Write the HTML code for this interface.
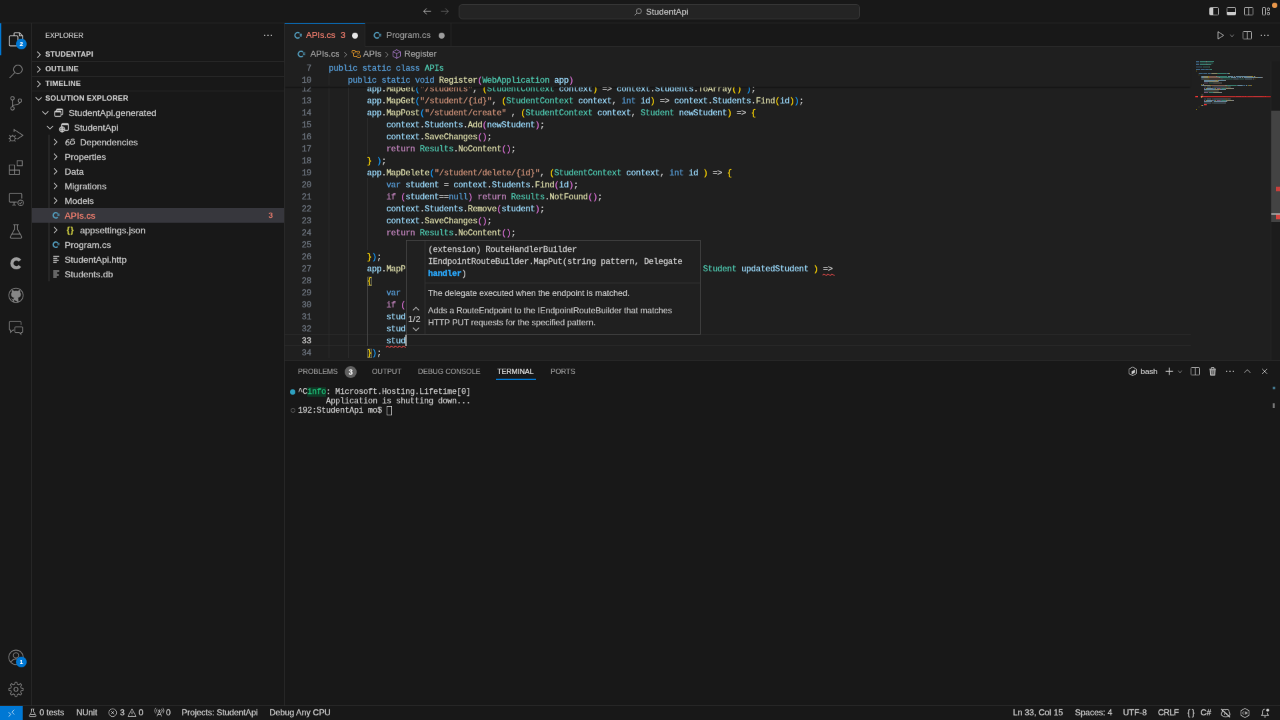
<!DOCTYPE html>
<html>
<head>
<meta charset="utf-8">
<title>APIs.cs — StudentApi</title>
<style>
html,body{margin:0;padding:0;width:1280px;height:720px;overflow:hidden;background:#181818;}
*{box-sizing:border-box;}
#app{will-change:transform;position:absolute;left:0;top:0;width:1920px;height:1080px;transform:scale(0.6666667);transform-origin:0 0;
  font-family:"Liberation Sans",sans-serif;font-size:13px;color:#cccccc;background:#181818;overflow:hidden;-webkit-text-stroke:0.180px;}
.abs{position:absolute;}
svg{display:block;overflow:visible;}
.ic{position:absolute;fill:none;stroke:currentColor;stroke-width:1;}

/* ---------- title bar ---------- */
#titlebar{left:0;top:0;width:1920px;height:35px;background:#181818;border-bottom:1px solid #2b2b2b;}
#cmdcenter{left:688px;top:6px;width:602px;height:23px;background:#242424;border:1px solid #3a3a3a;border-radius:6px;}
#cmdcenter span{position:absolute;left:280px;top:3px;font-size:13px;color:#cccccc;}

/* ---------- activity bar ---------- */
#activity{left:0;top:35px;width:48px;height:1023px;background:#181818;border-right:1px solid #2b2b2b;}
#activity .act{position:absolute;left:0;width:48px;height:48px;color:#868686;}
#activity .act.on{color:#d7d7d7;}
#activity .act.on:before{content:"";position:absolute;left:0;top:0;width:2px;height:48px;background:#0078d4;}
.badge{position:absolute;width:16px;height:16px;border-radius:8px;background:#0078d4;color:#fff;font-size:9px;font-weight:bold;text-align:center;line-height:16px;}

/* ---------- sidebar ---------- */
#sidebar{left:48px;top:35px;width:379px;height:1023px;background:#181818;border-right:1px solid #2b2b2b;}
#sidebar .title{left:20px;top:0;height:35px;line-height:37px;font-size:10.5px;color:#cccccc;}
.sec{position:absolute;left:0;width:378px;height:22px;border-top:1px solid #2b2b2b;font-size:11px;font-weight:bold;color:#cccccc;line-height:20px;letter-spacing:0.25px;}
.sec.first{border-top-color:transparent;}
.sec span{position:absolute;left:20px;}
.row{-webkit-text-stroke:0.280px;position:absolute;left:0;width:378px;height:22px;line-height:23.500px;font-size:13.6px;color:#cccccc;white-space:nowrap;}
.row span{position:absolute;top:0;}
.row.sel{background:#37373d;}
.err{color:#f88070;}

/* ---------- editor ---------- */
#editor{left:427px;top:35px;width:1493px;height:505px;background:#1f1f1f;}
#tabs{left:0;top:0;width:1493px;height:35px;background:#181818;border-bottom:1px solid #2b2b2b;}
.tab{position:absolute;top:0;height:35px;border-right:1px solid #2b2b2b;font-size:13px;line-height:35px;}
.tab.on{background:#1f1f1f;border-top:1px solid #0078d4;height:36px;line-height:33px;}
.tab span{position:absolute;top:0;}
#crumbs{left:0;top:35px;width:1493px;height:22px;line-height:22px;font-size:13px;color:#a9a9a9;background:#1f1f1f;}
#crumbs span{position:absolute;top:0;}

.code{font-family:"Liberation Mono",monospace;font-size:12.600px;letter-spacing:-0.360px;line-height:18px;white-space:pre;color:#cccccc;-webkit-text-stroke:0.300px;}
.ln{position:absolute;margin-top:2px;left:0;width:40px;text-align:right;color:#6e7681;}
.ln.cur{color:#cccccc;}
.cl{position:absolute;margin-top:2px;left:66px;}
.k{color:#569cd6}.c{color:#c586c0}.t{color:#4ec9b0}.v{color:#9cdcfe}.f{color:#dcdcaa}.s{color:#ce9178}
.b1{color:#ffd700}.b2{color:#da70d6}.b3{color:#179fff}
.sq{position:relative;}
.sq svg{position:absolute;left:0;bottom:-4px;}

/* ---------- panel ---------- */
#panel{left:427px;top:540px;width:1493px;height:518px;background:#181818;border-top:1px solid #2b2b2b;}
.ptab{position:absolute;top:0;height:35px;line-height:33px;font-size:10.75px;color:#9d9d9d;}
.ptab.on{color:#e7e7e7;}
.term{-webkit-text-stroke:0.250px;font-family:"Liberation Mono",monospace;font-size:12px;white-space:pre;color:#cccccc;position:absolute;}

/* ---------- status bar ---------- */
#status{left:0;top:1058px;width:1920px;height:22px;background:#181818;border-top:1px solid #2b2b2b;font-size:12.6px;line-height:21px;color:#cccccc;}
#status span{position:absolute;top:0;white-space:nowrap;-webkit-text-stroke:0.300px;}
#remote{left:0;top:0;width:34px;height:22px;background:#0078d4;}
#minimap i{position:absolute;height:1.400px;display:block;}
.guide{position:absolute;width:1px;background:#2e2e2e;}
.bm{outline:1px solid #6b6b55;outline-offset:-1px;background:rgba(120,120,90,0.12);}
.row .ic{stroke-width:1.300;}
</style>
</head>
<body>
<div id="app">

<!-- TITLEBAR -->
<div id="titlebar" class="abs">
  <svg class="ic" style="left:632.5px;top:9.0px;color:#cccccc" width="16" height="16" viewBox="0 0 16 16" stroke-width="1.1"><path d="M13.500 8h-11M7 3.500L2.500 8 7 12.500"/></svg><svg class="ic" style="left:659.0px;top:9.0px;color:#6c6c6c" width="16" height="16" viewBox="0 0 16 16" stroke-width="1.1"><path d="M2.500 8h11M9 3.500L13.500 8 9 12.500"/></svg>
  <div id="cmdcenter" class="abs"><svg class="ic" style="left:261.0px;top:4.0px;color:#cccccc" width="14" height="14" viewBox="0 0 16 16" stroke-width="1.1"><circle cx="9.500" cy="6.500" r="4.300"/><path d="M6.500 9.500L2 14"/></svg><span>StudentApi</span></div>
  <svg class="ic" style="left:1813.0px;top:9.0px;color:#cccccc" width="16" height="16" viewBox="0 0 16 16" stroke-width="1.1"><rect x="1.500" y="2.500" width="13" height="11" rx="1"/><path d="M2 3h4.500v10H2z" fill="currentColor" stroke="none"/><path d="M6.500 2.500v11"/></svg><svg class="ic" style="left:1839.0px;top:9.0px;color:#cccccc" width="16" height="16" viewBox="0 0 16 16" stroke-width="1.1"><rect x="1.500" y="2.500" width="13" height="11" rx="1"/><path d="M2 9h12v4H2z" fill="currentColor" stroke="none"/></svg><svg class="ic" style="left:1865.0px;top:9.0px;color:#cccccc" width="16" height="16" viewBox="0 0 16 16" stroke-width="1.1"><rect x="1.500" y="2.500" width="13" height="11" rx="1"/><path d="M8 2.500v11"/></svg><svg class="ic" style="left:1891.0px;top:9.0px;color:#cccccc" width="16" height="16" viewBox="0 0 16 16" stroke-width="1.1"><rect x="2.500" y="2.500" width="5" height="11" rx="1"/><rect x="10" y="3" width="3.500" height="3.500" rx="1"/><rect x="10" y="9.500" width="3.500" height="3.500" rx="1"/></svg>
  <div class="abs" style="left:1908px;top:4px;width:8px;height:8px;border-radius:4px;background:#e8964a;"></div>
</div>

<!-- ACTIVITY -->
<div id="activity" class="abs">
<div class="act on" style="top:0px"><svg class="ic" style="left:10px;top:10px" width="28" height="28" viewBox="0 0 24 24" stroke-width="1.700"><path d="M9.5 7.5v-3a1 1 0 0 1 1-1h6l4 4v9a1 1 0 0 1-1 1h-5"/><path d="M16.5 3.5v4h4"/><rect x="3.5" y="7.5" width="11" height="13" rx="1.2"/></svg><div class="badge" style="left:24px;top:23px;">2</div></div>
<div class="act" style="top:48px"><svg class="ic" style="left:10px;top:10px" width="28" height="28" viewBox="0 0 24 24" stroke-width="1.700"><circle cx="14.5" cy="9.5" r="5.6"/><path d="M10.5 13.6L3.8 20.5"/></svg></div>
<div class="act" style="top:96px"><svg class="ic" style="left:10px;top:10px" width="28" height="28" viewBox="0 0 24 24" stroke-width="1.700"><circle cx="7.5" cy="5.5" r="2.2"/><circle cx="7.5" cy="18.5" r="2.2"/><circle cx="17" cy="8.5" r="2.2"/><path d="M7.5 7.7v8.6"/><path d="M17 10.7c0 4.3-9.5 1.8-9.5 5.6"/></svg></div>
<div class="act" style="top:144px"><svg class="ic" style="left:10px;top:10px" width="28" height="28" viewBox="0 0 24 24" stroke-width="1.700"><path d="M9.5 7.5V4.5L21 12l-7.5 5"/><circle cx="7.5" cy="16" r="3.2"/><path d="M7.5 12.8v-1.5M4.3 16H2.5M12.5 16h-1.8M5 13.5L3.5 12M10 13.5l1.5-1.5M5 18.6l-1.5 1.4M10 18.6l1.5 1.4"/></svg></div>
<div class="act" style="top:192px"><svg class="ic" style="left:10px;top:10px" width="28" height="28" viewBox="0 0 24 24" stroke-width="1.700"><path d="M3.5 9h6.5v6.5h6.5V21H3.5z"/><path d="M3.5 15.5H10V21"/><rect x="13.5" y="3.5" width="6.5" height="6.5"/></svg></div>
<div class="act" style="top:240px"><svg class="ic" style="left:10px;top:10px" width="28" height="28" viewBox="0 0 24 24" stroke-width="1.700"><path d="M13 15.5H4.5a1 1 0 0 1-1-1V5.500a1 1 0 0 1 1-1h14a1 1 0 0 1 1 1V11"/><path d="M7 19.500h5M9.5 15.500v4"/><circle cx="18" cy="16.500" r="3.6"/><path d="M16.300 16.600l1.200 1.200 2.200-2.500"/></svg></div>
<div class="act" style="top:288px"><svg class="ic" style="left:10px;top:10px" width="28" height="28" viewBox="0 0 24 24" stroke-width="1.700"><path d="M8.500 3.500h7"/><path d="M10 3.500v6L4.700 19a1.200 1.200 0 0 0 1 1.800h12.600a1.200 1.200 0 0 0 1-1.800L14 9.500v-6"/><path d="M6.800 15.500h10.400"/></svg></div>
<div class="act" style="top:336px"><svg class="ic" style="left:10px;top:10px" width="28" height="28" viewBox="0 0 24 24" stroke-width="1.700"><path d="M17 8.600A5.700 5.700 0 1 0 17 15.400" stroke-width="4.200" stroke="#9e9e9e"/></svg></div>
<div class="act" style="top:384px"><svg class="ic" style="left:10px;top:10px" width="28" height="28" viewBox="0 0 24 24" stroke-width="1.700"><circle cx="12" cy="12" r="9.200"/><path d="M9.300 20.500v-3.200c-2.500.6-3.300-1.300-3.800-1.800M9.300 17.300c-.2-1 .2-1.800.7-2.300-2.200-.3-4-1.200-4-4.300 0-1 .4-2 1-2.700-.2-.6-.3-1.500.1-2.500 1 0 2 .6 2.600 1.100 1.500-.4 3.100-.4 4.600 0 .6-.5 1.600-1.100 2.600-1.100.4 1 .3 1.900.1 2.500.6.700 1 1.700 1 2.700 0 3.100-1.800 4-4 4.300.5.500.9 1.300.7 2.300v3.200z" fill="currentColor" stroke-width="0.600"/></svg></div>
<div class="act" style="top:432px"><svg class="ic" style="left:10px;top:10px" width="28" height="28" viewBox="0 0 24 24" stroke-width="1.700"><path d="M9.500 15.500H8l-3 3v-3H4.500a1 1 0 0 1-1-1v-9a1 1 0 0 1 1-1h13a1 1 0 0 1 1 1V9"/><path d="M11.500 11.500h8a1 1 0 0 1 1 1v5a1 1 0 0 1-1 1H18.500v2.500L16 18.500h-4.500a1 1 0 0 1-1-1v-5a1 1 0 0 1 1-1z"/></svg></div>
<div class="act" style="top:927px"><svg class="ic" style="left:10px;top:10px" width="28" height="28" viewBox="0 0 24 24" stroke-width="1.700"><circle cx="12" cy="12" r="9.300"/><circle cx="12" cy="9.500" r="3.400"/><path d="M5.500 18.500c1.200-3 3.500-4.200 6.500-4.200s5.300 1.200 6.500 4.200"/></svg><div class="badge" style="left:24px;top:23px;">1</div></div>
<div class="act" style="top:975px"><svg class="ic" style="left:10px;top:10px" width="28" height="28" viewBox="0 0 24 24" stroke-width="1.700"><path d="M10.79 2.78 L13.21 2.78 L13.75 5.43 L15.41 6.12 L17.67 4.63 L19.37 6.33 L17.88 8.59 L18.57 10.25 L21.22 10.79 L21.22 13.21 L18.57 13.75 L17.88 15.41 L19.37 17.67 L17.67 19.37 L15.41 17.88 L13.75 18.57 L13.21 21.22 L10.79 21.22 L10.25 18.57 L8.59 17.88 L6.33 19.37 L4.63 17.67 L6.12 15.41 L5.43 13.75 L2.78 13.21 L2.78 10.79 L5.43 10.25 L6.12 8.59 L4.63 6.33 L6.33 4.63 L8.59 6.12 L10.25 5.43Z" stroke-linejoin="round"/><circle cx="12" cy="12" r="2.600"/></svg></div>
</div>

<!-- SIDEBAR -->
<div id="sidebar" class="abs">
  <div class="title abs">EXPLORER</div>
  <svg class="abs" style="left:346px;top:10px" width="16" height="16" viewBox="0 0 16 16"><circle cx="3" cy="8" r="1.1" fill="#ccc"/><circle cx="8" cy="8" r="1.1" fill="#ccc"/><circle cx="13" cy="8" r="1.1" fill="#ccc"/></svg>
<div class="sec first" style="top:35px"><svg class="ic" style="left:2px;top:3px" width="16" height="16" viewBox="0 0 16 16"><path d="M6 3.5l4.5 4.5L6 12.5" stroke-width="1.1"/></svg><span>STUDENTAPI</span></div>
<div class="sec" style="top:57px"><svg class="ic" style="left:2px;top:3px" width="16" height="16" viewBox="0 0 16 16"><path d="M6 3.5l4.5 4.5L6 12.5" stroke-width="1.1"/></svg><span>OUTLINE</span></div>
<div class="sec" style="top:79px"><svg class="ic" style="left:2px;top:3px" width="16" height="16" viewBox="0 0 16 16"><path d="M6 3.5l4.5 4.5L6 12.5" stroke-width="1.1"/></svg><span>TIMELINE</span></div>
<div class="sec" style="top:101px"><svg class="ic" style="left:2px;top:3px" width="16" height="16" viewBox="0 0 16 16"><path d="M3.5 6l4.5 4.5L12.5 6" stroke-width="1.1"/></svg><span>SOLUTION EXPLORER</span></div>

  <div class="abs" style="left:25px;top:167px;width:1px;height:220px;background:#4c4c4c;"></div>
<div class="row" style="top:123px"><svg class="ic" style="left:12px;top:3px" width="16" height="16" viewBox="0 0 16 16"><path d="M3.5 6l4.5 4.5L12.5 6" stroke-width="1.1"/></svg><svg class="ic" style="left:32px;top:3px" width="16" height="16" viewBox="0 0 16 16"><rect x="2" y="5.500" width="9.500" height="8" rx="1.600"/><path d="M2.500 6.600h8.500" stroke-width="1.800"/><path d="M4.800 5v-1a1.600 1.600 0 0 1 1.600-1.600h6a1.600 1.600 0 0 1 1.600 1.600v5.500a1.600 1.600 0 0 1-1.600 1.600h-.8"/><path d="M5.500 3.300h8" stroke-width="1.600"/></svg><span style="left:55px">StudentApi.generated</span></div>
<div class="row" style="top:145px"><svg class="ic" style="left:19px;top:3px" width="16" height="16" viewBox="0 0 16 16"><path d="M3.5 6l4.5 4.5L12.5 6" stroke-width="1.1"/></svg><svg class="ic" style="left:40px;top:3px" width="16" height="16" viewBox="0 0 16 16"><rect x="4.500" y="2.500" width="10" height="10" rx="1.600"/><path d="M5 3.800h9" stroke-width="2"/><circle cx="5.200" cy="11" r="3.900" fill="#181818"/><path d="M1.300 11h7.800M5.200 7.100v7.800"/><ellipse cx="5.200" cy="11" rx="1.700" ry="3.900"/></svg><span style="left:63px">StudentApi</span></div>
<div class="row" style="top:167px"><svg class="ic" style="left:27px;top:3px" width="16" height="16" viewBox="0 0 16 16"><path d="M6 3.5l4.5 4.5L6 12.5" stroke-width="1.1"/></svg><svg class="ic" style="left:49px;top:3px" width="16" height="16" viewBox="0 0 16 16"><circle cx="4.300" cy="10.200" r="2.500"/><rect x="8.600" y="6.300" width="6" height="4.800" rx="1.300" transform="rotate(-8 11.600 8.700)"/><path d="M1.900 9.500c-.3-3.500 2-5.500 5.200-4.800M9.300 5c1.400-1.500 3.800-1.700 5.400-.4"/></svg><span style="left:72px">Dependencies</span></div>
<div class="row" style="top:189px"><svg class="ic" style="left:27px;top:3px" width="16" height="16" viewBox="0 0 16 16"><path d="M6 3.5l4.5 4.5L6 12.5" stroke-width="1.1"/></svg><span style="left:49px">Properties</span></div>
<div class="row" style="top:211px"><svg class="ic" style="left:27px;top:3px" width="16" height="16" viewBox="0 0 16 16"><path d="M6 3.5l4.5 4.5L6 12.5" stroke-width="1.1"/></svg><span style="left:49px">Data</span></div>
<div class="row" style="top:233px"><svg class="ic" style="left:27px;top:3px" width="16" height="16" viewBox="0 0 16 16"><path d="M6 3.5l4.5 4.5L6 12.5" stroke-width="1.1"/></svg><span style="left:49px">Migrations</span></div>
<div class="row" style="top:255px"><svg class="ic" style="left:27px;top:3px" width="16" height="16" viewBox="0 0 16 16"><path d="M6 3.5l4.5 4.5L6 12.5" stroke-width="1.1"/></svg><span style="left:49px">Models</span></div>
<div class="row sel" style="top:277px"><svg class="abs" style="left:28px;top:3px" width="16" height="16" viewBox="0 0 16 16"><path d="M10.6 5.2A4 4 0 1 0 10.6 10.8" fill="none" stroke="#519aba" stroke-width="2.2"/><path d="M10.2 6.2h3.2M10.2 8.2h3.2M11 5.2v4M12.6 5.2v4" stroke="#519aba" stroke-width="0.8" fill="none"/></svg><span class="err" style="left:49px">APIs.cs</span><span class="err" style="left:355px;font-size:11px;">3</span></div>
<div class="row" style="top:299px"><svg class="ic" style="left:27px;top:3px" width="16" height="16" viewBox="0 0 16 16"><path d="M6 3.5l4.5 4.5L6 12.5" stroke-width="1.1"/></svg><span style="left:52px;color:#cbcb41;font-size:12px;font-weight:bold;letter-spacing:1px;">{}</span><span style="left:72px">appsettings.json</span></div>
<div class="row" style="top:321px"><svg class="abs" style="left:28px;top:3px" width="16" height="16" viewBox="0 0 16 16"><path d="M10.6 5.2A4 4 0 1 0 10.6 10.8" fill="none" stroke="#519aba" stroke-width="2.2"/><path d="M10.2 6.2h3.2M10.2 8.2h3.2M11 5.2v4M12.6 5.2v4" stroke="#519aba" stroke-width="0.8" fill="none"/></svg><span style="left:49px">Program.cs</span></div>
<div class="row" style="top:343px"><svg class="abs" style="left:29px;top:3px" width="16" height="16" viewBox="0 0 16 16"><path d="M3 3.5h9M3 6.5h6M3 9.5h8M3 12.5h5" stroke="#c5c5c5" stroke-width="1.7" fill="none"/></svg><span style="left:49px">StudentApi.http</span></div>
<div class="row" style="top:365px"><svg class="abs" style="left:29px;top:3px" width="16" height="16" viewBox="0 0 16 16"><path d="M3 3.5h9M3 6.5h6M3 9.5h8M3 12.5h5" stroke="#c5c5c5" stroke-width="1.7" fill="none"/></svg><span style="left:49px">Students.db</span></div>
</div>

<!-- EDITOR -->
<div id="editor" class="abs">
  <div id="tabs" class="abs">
    <div class="tab on" style="left:0;width:121px;">
      <svg class="ic" style="left:11.6px;top:9.0px;color:#cccccc" width="16" height="16" viewBox="0 0 16 16" stroke-width="1.1"><path d="M10.300 5A4.100 4.100 0 1 0 10.300 11" stroke="#519aba" stroke-width="2.100"/><path d="M10.500 6.500h3.500M10.500 8.800h3.500M11.400 5.300v4.700M13.100 5.300v4.700" stroke="#519aba" stroke-width=".8"/></svg><span class="err" style="left:32px;">APIs.cs</span><span class="err" style="left:84px;">3</span>
      <div class="abs" style="left:100.500px;top:12.500px;width:9px;height:9px;border-radius:5px;background:#e6e6e6;"></div>
    </div>
    <div class="tab" style="left:121px;width:129px;color:#9d9d9d;">
      <svg class="ic" style="left:10.1px;top:10.0px;color:#cccccc" width="16" height="16" viewBox="0 0 16 16" stroke-width="1.1"><path d="M10.300 5A4.100 4.100 0 1 0 10.300 11" stroke="#519aba" stroke-width="2.100"/><path d="M10.500 6.500h3.500M10.500 8.800h3.500M11.400 5.300v4.700M13.100 5.300v4.700" stroke="#519aba" stroke-width=".8"/></svg><span style="left:31.500px;">Program.cs</span>
      <div class="abs" style="left:109.500px;top:13.500px;width:9px;height:9px;border-radius:5px;background:#9d9d9d;"></div>
    </div>
    <svg class="ic" style="left:1396.0px;top:10.0px;color:#cccccc" width="16" height="16" viewBox="0 0 16 16" stroke-width="1.1"><path d="M4 2.500v11l8.500-5.500z" stroke-linejoin="round"/></svg><svg class="ic" style="left:1415.0px;top:12.0px;color:#cccccc" width="12" height="12" viewBox="0 0 16 16" stroke-width="1.1"><path d="M4 6.500l4 4 4-4"/></svg><svg class="ic" style="left:1436.0px;top:10.0px;color:#cccccc" width="16" height="16" viewBox="0 0 16 16" stroke-width="1.1"><rect x="1.500" y="2.500" width="13" height="11" rx="1"/><path d="M8 2.500v11"/></svg><svg class="ic" style="left:1462.0px;top:10.0px;color:#cccccc" width="16" height="16" viewBox="0 0 16 16" stroke-width="1.1"><circle cx="3" cy="8" r="1" fill="currentColor" stroke="none"/><circle cx="8" cy="8" r="1" fill="currentColor" stroke="none"/><circle cx="13" cy="8" r="1" fill="currentColor" stroke="none"/></svg>
  </div>
  <div id="crumbs" class="abs">
    <svg class="ic" style="left:16.8px;top:3.0px;color:#cccccc" width="16" height="16" viewBox="0 0 16 16" stroke-width="1.1"><path d="M10.300 5A4.100 4.100 0 1 0 10.300 11" stroke="#519aba" stroke-width="2.100"/><path d="M10.500 6.500h3.500M10.500 8.800h3.500M11.400 5.300v4.700M13.100 5.300v4.700" stroke="#519aba" stroke-width=".8"/></svg><span style="left:38.400px;">APIs.cs</span><svg class="ic" style="left:84.0px;top:4.5px;color:#a9a9a9" width="14" height="14" viewBox="0 0 16 16" stroke-width="1.1"><path d="M6 3.500l4.500 4.500L6 12.500"/></svg><svg class="ic" style="left:99.0px;top:3.0px;color:#ee9d28" width="16" height="16" viewBox="0 0 16 16" stroke-width="1.2"><rect x="2" y="2.500" width="5" height="4" rx="1"/><rect x="9.500" y="9.500" width="5" height="4" rx="1"/><rect x="9.500" y="4" width="4" height="3" rx="1"/><path d="M4.500 6.500v5h5M7 4.500h2.500" /></svg><span style="left:117.800px;">APIs</span><svg class="ic" style="left:146.0px;top:4.5px;color:#a9a9a9" width="14" height="14" viewBox="0 0 16 16" stroke-width="1.1"><path d="M6 3.500l4.500 4.500L6 12.500"/></svg><svg class="ic" style="left:160.2px;top:3.0px;color:#b180d7" width="16" height="16" viewBox="0 0 16 16" stroke-width="1.2"><path d="M8 1.500l5.500 3v7L8 14.500l-5.500-3v-7z"/><path d="M2.500 4.500L8 7.500l5.500-3M8 7.500v7"/></svg><span style="left:179.500px;">Register</span>
  </div>

  <!-- code area -->
  <div id="codearea" class="abs" style="left:0;top:57px;width:1493px;height:448px;overflow:hidden;">
   <div class="abs" style="left:0;top:-57px;width:1493px;height:502px;">
    <div class="abs" style="left:0;top:466px;width:1359px;height:18px;border-top:1px solid #2a2a2a;border-bottom:1px solid #2a2a2a;"></div>
<div class="guide" style="left:66.0px;top:88px;height:414px;"></div><div class="guide" style="left:95.0px;top:88px;height:414px;"></div><div class="guide" style="left:124.0px;top:142px;height:54px;"></div><div class="guide" style="left:124.0px;top:232px;height:108px;"></div><div class="guide" style="left:124.0px;top:394px;height:90px;background:#4a4a4a;"></div>
<div class="ln code" style="top:88px">12</div><div class="cl code" style="top:88px">        <span class="v">app</span>.<span class="f">MapGet</span><span class="b3">(</span><span class="s">"/students"</span>, <span class="b1">(</span><span class="t">StudentContext</span> <span class="v">context</span><span class="b1">)</span> =&gt; <span class="v">context</span>.<span class="v">Students</span>.<span class="f">ToArray</span><span class="b1">()</span> <span class="b3">)</span>;</div>
<div class="ln code" style="top:106px">13</div><div class="cl code" style="top:106px">        <span class="v">app</span>.<span class="f">MapGet</span><span class="b3">(</span><span class="s">"/student/{id}"</span>, <span class="b1">(</span><span class="t">StudentContext</span> <span class="v">context</span>, <span class="k">int</span> <span class="v">id</span><span class="b1">)</span> =&gt; <span class="v">context</span>.<span class="v">Students</span>.<span class="f">Find</span><span class="b1">(</span><span class="v">id</span><span class="b1">)</span><span class="b3">)</span>;</div>
<div class="ln code" style="top:124px">14</div><div class="cl code" style="top:124px">        <span class="v">app</span>.<span class="f">MapPost</span><span class="b3">(</span><span class="s">"/student/create"</span> , <span class="b1">(</span><span class="t">StudentContext</span> <span class="v">context</span>, <span class="t">Student</span> <span class="v">newStudent</span><span class="b1">)</span> =&gt; <span class="b1">{</span></div>
<div class="ln code" style="top:142px">15</div><div class="cl code" style="top:142px">            <span class="v">context</span>.<span class="v">Students</span>.<span class="f">Add</span><span class="b2">(</span><span class="v">newStudent</span><span class="b2">)</span>;</div>
<div class="ln code" style="top:160px">16</div><div class="cl code" style="top:160px">            <span class="v">context</span>.<span class="f">SaveChanges</span><span class="b2">()</span>;</div>
<div class="ln code" style="top:178px">17</div><div class="cl code" style="top:178px">            <span class="c">return</span> <span class="t">Results</span>.<span class="f">NoContent</span><span class="b2">()</span>;</div>
<div class="ln code" style="top:196px">18</div><div class="cl code" style="top:196px">        <span class="b1">}</span> <span class="b3">)</span>;</div>
<div class="ln code" style="top:214px">19</div><div class="cl code" style="top:214px">        <span class="v">app</span>.<span class="f">MapDelete</span><span class="b3">(</span><span class="s">"/student/delete/{id}"</span>, <span class="b1">(</span><span class="t">StudentContext</span> <span class="v">context</span>, <span class="k">int</span> <span class="v">id</span> <span class="b1">)</span> =&gt; <span class="b1">{</span></div>
<div class="ln code" style="top:232px">20</div><div class="cl code" style="top:232px">            <span class="k">var</span> <span class="v">student</span> = <span class="v">context</span>.<span class="v">Students</span>.<span class="f">Find</span><span class="b2">(</span><span class="v">id</span><span class="b2">)</span>;</div>
<div class="ln code" style="top:250px">21</div><div class="cl code" style="top:250px">            <span class="c">if</span> <span class="b2">(</span><span class="v">student</span>==<span class="k">null</span><span class="b2">)</span> <span class="c">return</span> <span class="t">Results</span>.<span class="f">NotFound</span><span class="b2">()</span>;</div>
<div class="ln code" style="top:268px">22</div><div class="cl code" style="top:268px">            <span class="v">context</span>.<span class="v">Students</span>.<span class="f">Remove</span><span class="b2">(</span><span class="v">student</span><span class="b2">)</span>;</div>
<div class="ln code" style="top:286px">23</div><div class="cl code" style="top:286px">            <span class="v">context</span>.<span class="f">SaveChanges</span><span class="b2">()</span>;</div>
<div class="ln code" style="top:304px">24</div><div class="cl code" style="top:304px">            <span class="c">return</span> <span class="t">Results</span>.<span class="f">NoContent</span><span class="b2">()</span>;</div>
<div class="ln code" style="top:322px">25</div><div class="cl code" style="top:322px"></div>
<div class="ln code" style="top:340px">26</div><div class="cl code" style="top:340px">        <span class="b1">}</span><span class="b3">)</span>;</div>
<div class="ln code" style="top:358px">27</div><div class="cl code" style="top:358px">        <span class="v">app</span>.<span class="f">MapPut</span><span class="b3">(</span><span class="s">"/student/update/{id}"</span> , <span class="b1">(</span><span class="t">StudentContext</span> <span class="v">context</span>, <span class="k">int</span> <span class="v">id</span> , <span class="t">Student</span> <span class="v">updatedStudent</span> <span class="b1">)</span> <span class="sq">=&gt;<svg width="15" height="5" viewBox="0 0 15 5"><path d="M0 3.200 q1.5 -3 3 -1.500 t3 1.500 q1.5 -3 3 -1.500 t3 1.500 q1.5 -3 3 -1.500 t3 1.500" fill="none" stroke="#f14c4c" stroke-width="1.100"/></svg></span></div>
<div class="ln code" style="top:376px">28</div><div class="cl code" style="top:376px">        <span class="b1 bm">{</span></div>
<div class="ln code" style="top:394px">29</div><div class="cl code" style="top:394px">            <span class="k">var</span> <span class="v">student</span> = <span class="v">context</span>.<span class="v">Students</span>.<span class="f">Find</span><span class="b2">(</span><span class="v">id</span><span class="b2">)</span>;</div>
<div class="ln code" style="top:412px">30</div><div class="cl code" style="top:412px">            <span class="c">if</span> <span class="b2">(</span><span class="v">student</span>==<span class="k">null</span><span class="b2">)</span> <span class="c">return</span> <span class="t">Results</span>.<span class="f">NotFound</span><span class="b2">()</span>;</div>
<div class="ln code" style="top:430px">31</div><div class="cl code" style="top:430px">            <span class="v">student</span>.<span class="v">Name</span> = <span class="v">updatedStudent</span>.<span class="v">Name</span>;</div>
<div class="ln code" style="top:448px">32</div><div class="cl code" style="top:448px">            <span class="v">student</span>.<span class="v">Age</span> = <span class="v">updatedStudent</span>.<span class="v">Age</span>;</div>
<div class="ln code cur" style="top:466px">33</div><div class="cl code" style="top:466px">            <span class="v sq">stud<svg width="29" height="5" viewBox="0 0 29 5"><path d="M0 3.200 q1.5 -3 3 -1.500 t3 1.500 q1.5 -3 3 -1.500 t3 1.500 q1.5 -3 3 -1.500 t3 1.500 q1.5 -3 3 -1.500 t3 1.500 q1.5 -3 3 -1.500 t3 1.500" fill="none" stroke="#f14c4c" stroke-width="1.100"/></svg></span></div>
<div class="ln code" style="top:484px">34</div><div class="cl code" style="top:484px">        <span class="b1 bm">}</span><span class="b3">)</span>;</div>
    <div class="abs" style="left:181px;top:467px;width:2px;height:17px;background:#aeafad;"></div>
   </div>
  </div>



  <!-- minimap -->
  <div id="minimap" class="abs" style="left:1359px;top:57px;width:120px;height:448px;background:#1f1f1f;">
    <div class="abs" style="left:8px;top:0;width:112px;height:80px;opacity:.72;"><i style="left:0px;top:0px;width:5px;background:#569cd6"></i><i style="left:6px;top:0px;width:9px;background:#4ec9b0"></i><i style="left:15px;top:0px;width:1px;background:#cccccc"></i><i style="left:16px;top:0px;width:11px;background:#4ec9b0"></i><i style="left:0px;top:2px;width:5px;background:#569cd6"></i><i style="left:6px;top:2px;width:9px;background:#4ec9b0"></i><i style="left:15px;top:2px;width:1px;background:#cccccc"></i><i style="left:16px;top:2px;width:10px;background:#4ec9b0"></i><i style="left:0px;top:4px;width:5px;background:#569cd6"></i><i style="left:6px;top:4px;width:10px;background:#4ec9b0"></i><i style="left:16px;top:4px;width:1px;background:#cccccc"></i><i style="left:17px;top:4px;width:6px;background:#4ec9b0"></i><i style="left:0px;top:8px;width:9px;background:#569cd6"></i><i style="left:10px;top:8px;width:10px;background:#4ec9b0"></i><i style="left:20px;top:8px;width:1px;background:#cccccc"></i><i style="left:0px;top:12px;width:6px;background:#569cd6"></i><i style="left:7px;top:12px;width:6px;background:#569cd6"></i><i style="left:14px;top:12px;width:5px;background:#569cd6"></i><i style="left:20px;top:12px;width:4px;background:#4ec9b0"></i><i style="left:0px;top:14px;width:1px;background:#ffd700"></i><i style="left:4px;top:18px;width:6px;background:#569cd6"></i><i style="left:11px;top:18px;width:6px;background:#569cd6"></i><i style="left:18px;top:18px;width:4px;background:#569cd6"></i><i style="left:23px;top:18px;width:8px;background:#dcdcaa"></i><i style="left:31px;top:18px;width:1px;background:#ffd700"></i><i style="left:32px;top:18px;width:14px;background:#4ec9b0"></i><i style="left:47px;top:18px;width:3px;background:#9cdcfe"></i><i style="left:50px;top:18px;width:1px;background:#ffd700"></i><i style="left:4px;top:20px;width:1px;background:#ffd700"></i><i style="left:8px;top:22px;width:3px;background:#9cdcfe"></i><i style="left:11px;top:22px;width:1px;background:#cccccc"></i><i style="left:12px;top:22px;width:6px;background:#dcdcaa"></i><i style="left:18px;top:22px;width:1px;background:#ffd700"></i><i style="left:19px;top:22px;width:11px;background:#ce9178"></i><i style="left:30px;top:22px;width:2px;background:#cccccc"></i><i style="left:32px;top:22px;width:15px;background:#4ec9b0"></i><i style="left:48px;top:22px;width:8px;background:#9cdcfe"></i><i style="left:57px;top:22px;width:2px;background:#cccccc"></i><i style="left:60px;top:22px;width:7px;background:#9cdcfe"></i><i style="left:67px;top:22px;width:1px;background:#cccccc"></i><i style="left:68px;top:22px;width:8px;background:#9cdcfe"></i><i style="left:76px;top:22px;width:1px;background:#cccccc"></i><i style="left:77px;top:22px;width:7px;background:#dcdcaa"></i><i style="left:84px;top:22px;width:2px;background:#ffd700"></i><i style="left:87px;top:22px;width:2px;background:#cccccc"></i><i style="left:8px;top:24px;width:3px;background:#9cdcfe"></i><i style="left:11px;top:24px;width:1px;background:#cccccc"></i><i style="left:12px;top:24px;width:6px;background:#dcdcaa"></i><i style="left:18px;top:24px;width:1px;background:#ffd700"></i><i style="left:19px;top:24px;width:15px;background:#ce9178"></i><i style="left:34px;top:24px;width:2px;background:#cccccc"></i><i style="left:36px;top:24px;width:15px;background:#4ec9b0"></i><i style="left:52px;top:24px;width:8px;background:#9cdcfe"></i><i style="left:61px;top:24px;width:3px;background:#569cd6"></i><i style="left:65px;top:24px;width:3px;background:#9cdcfe"></i><i style="left:69px;top:24px;width:2px;background:#cccccc"></i><i style="left:72px;top:24px;width:7px;background:#9cdcfe"></i><i style="left:79px;top:24px;width:1px;background:#cccccc"></i><i style="left:80px;top:24px;width:8px;background:#9cdcfe"></i><i style="left:88px;top:24px;width:1px;background:#cccccc"></i><i style="left:89px;top:24px;width:4px;background:#dcdcaa"></i><i style="left:93px;top:24px;width:4px;background:#9cdcfe"></i><i style="left:97px;top:24px;width:3px;background:#cccccc"></i><i style="left:8px;top:26px;width:3px;background:#9cdcfe"></i><i style="left:11px;top:26px;width:1px;background:#cccccc"></i><i style="left:12px;top:26px;width:7px;background:#dcdcaa"></i><i style="left:19px;top:26px;width:1px;background:#ffd700"></i><i style="left:20px;top:26px;width:17px;background:#ce9178"></i><i style="left:37px;top:26px;width:3px;background:#cccccc"></i><i style="left:40px;top:26px;width:15px;background:#4ec9b0"></i><i style="left:56px;top:26px;width:8px;background:#9cdcfe"></i><i style="left:65px;top:26px;width:7px;background:#4ec9b0"></i><i style="left:73px;top:26px;width:11px;background:#9cdcfe"></i><i style="left:85px;top:26px;width:2px;background:#cccccc"></i><i style="left:88px;top:26px;width:1px;background:#ffd700"></i><i style="left:12px;top:28px;width:7px;background:#9cdcfe"></i><i style="left:19px;top:28px;width:1px;background:#cccccc"></i><i style="left:20px;top:28px;width:8px;background:#9cdcfe"></i><i style="left:28px;top:28px;width:1px;background:#cccccc"></i><i style="left:29px;top:28px;width:3px;background:#dcdcaa"></i><i style="left:32px;top:28px;width:1px;background:#ffd700"></i><i style="left:33px;top:28px;width:10px;background:#9cdcfe"></i><i style="left:43px;top:28px;width:2px;background:#cccccc"></i><i style="left:12px;top:30px;width:7px;background:#9cdcfe"></i><i style="left:19px;top:30px;width:1px;background:#cccccc"></i><i style="left:20px;top:30px;width:11px;background:#dcdcaa"></i><i style="left:31px;top:30px;width:3px;background:#cccccc"></i><i style="left:12px;top:32px;width:6px;background:#c586c0"></i><i style="left:19px;top:32px;width:7px;background:#4ec9b0"></i><i style="left:26px;top:32px;width:1px;background:#cccccc"></i><i style="left:27px;top:32px;width:9px;background:#dcdcaa"></i><i style="left:36px;top:32px;width:3px;background:#cccccc"></i><i style="left:8px;top:34px;width:1px;background:#ffd700"></i><i style="left:10px;top:34px;width:2px;background:#cccccc"></i><i style="left:8px;top:36px;width:3px;background:#9cdcfe"></i><i style="left:11px;top:36px;width:1px;background:#cccccc"></i><i style="left:12px;top:36px;width:9px;background:#dcdcaa"></i><i style="left:21px;top:36px;width:1px;background:#ffd700"></i><i style="left:22px;top:36px;width:22px;background:#ce9178"></i><i style="left:44px;top:36px;width:2px;background:#cccccc"></i><i style="left:46px;top:36px;width:15px;background:#4ec9b0"></i><i style="left:62px;top:36px;width:8px;background:#9cdcfe"></i><i style="left:71px;top:36px;width:3px;background:#569cd6"></i><i style="left:75px;top:36px;width:2px;background:#9cdcfe"></i><i style="left:78px;top:36px;width:1px;background:#ffd700"></i><i style="left:80px;top:36px;width:2px;background:#cccccc"></i><i style="left:83px;top:36px;width:1px;background:#ffd700"></i><i style="left:12px;top:38px;width:3px;background:#569cd6"></i><i style="left:16px;top:38px;width:7px;background:#9cdcfe"></i><i style="left:24px;top:38px;width:1px;background:#cccccc"></i><i style="left:26px;top:38px;width:7px;background:#9cdcfe"></i><i style="left:33px;top:38px;width:1px;background:#cccccc"></i><i style="left:34px;top:38px;width:8px;background:#9cdcfe"></i><i style="left:42px;top:38px;width:1px;background:#cccccc"></i><i style="left:43px;top:38px;width:4px;background:#dcdcaa"></i><i style="left:47px;top:38px;width:1px;background:#ffd700"></i><i style="left:48px;top:38px;width:2px;background:#9cdcfe"></i><i style="left:50px;top:38px;width:2px;background:#cccccc"></i><i style="left:12px;top:40px;width:2px;background:#c586c0"></i><i style="left:15px;top:40px;width:1px;background:#ffd700"></i><i style="left:16px;top:40px;width:7px;background:#9cdcfe"></i><i style="left:23px;top:40px;width:2px;background:#cccccc"></i><i style="left:25px;top:40px;width:4px;background:#569cd6"></i><i style="left:29px;top:40px;width:1px;background:#ffd700"></i><i style="left:31px;top:40px;width:6px;background:#c586c0"></i><i style="left:38px;top:40px;width:7px;background:#4ec9b0"></i><i style="left:45px;top:40px;width:1px;background:#cccccc"></i><i style="left:46px;top:40px;width:8px;background:#dcdcaa"></i><i style="left:54px;top:40px;width:3px;background:#cccccc"></i><i style="left:12px;top:42px;width:7px;background:#9cdcfe"></i><i style="left:19px;top:42px;width:1px;background:#cccccc"></i><i style="left:20px;top:42px;width:8px;background:#9cdcfe"></i><i style="left:28px;top:42px;width:1px;background:#cccccc"></i><i style="left:29px;top:42px;width:6px;background:#dcdcaa"></i><i style="left:35px;top:42px;width:1px;background:#ffd700"></i><i style="left:36px;top:42px;width:7px;background:#9cdcfe"></i><i style="left:43px;top:42px;width:2px;background:#cccccc"></i><i style="left:12px;top:44px;width:7px;background:#9cdcfe"></i><i style="left:19px;top:44px;width:1px;background:#cccccc"></i><i style="left:20px;top:44px;width:11px;background:#dcdcaa"></i><i style="left:31px;top:44px;width:3px;background:#cccccc"></i><i style="left:12px;top:46px;width:6px;background:#c586c0"></i><i style="left:19px;top:46px;width:7px;background:#4ec9b0"></i><i style="left:26px;top:46px;width:1px;background:#cccccc"></i><i style="left:27px;top:46px;width:9px;background:#dcdcaa"></i><i style="left:36px;top:46px;width:3px;background:#cccccc"></i><i style="left:8px;top:50px;width:1px;background:#ffd700"></i><i style="left:9px;top:50px;width:2px;background:#cccccc"></i><i style="left:8px;top:52px;width:3px;background:#9cdcfe"></i><i style="left:11px;top:52px;width:1px;background:#cccccc"></i><i style="left:12px;top:52px;width:6px;background:#dcdcaa"></i><i style="left:18px;top:52px;width:1px;background:#ffd700"></i><i style="left:19px;top:52px;width:22px;background:#ce9178"></i><i style="left:41px;top:52px;width:3px;background:#cccccc"></i><i style="left:44px;top:52px;width:15px;background:#4ec9b0"></i><i style="left:60px;top:52px;width:8px;background:#9cdcfe"></i><i style="left:69px;top:52px;width:3px;background:#569cd6"></i><i style="left:73px;top:52px;width:2px;background:#9cdcfe"></i><i style="left:78px;top:52px;width:7px;background:#4ec9b0"></i><i style="left:86px;top:52px;width:14px;background:#9cdcfe"></i><i style="left:101px;top:52px;width:1px;background:#ffd700"></i><i style="left:103px;top:52px;width:2px;background:#cccccc"></i><i style="left:8px;top:54px;width:1px;background:#ffd700"></i><i style="left:12px;top:56px;width:3px;background:#569cd6"></i><i style="left:16px;top:56px;width:7px;background:#9cdcfe"></i><i style="left:24px;top:56px;width:1px;background:#cccccc"></i><i style="left:26px;top:56px;width:7px;background:#9cdcfe"></i><i style="left:33px;top:56px;width:1px;background:#cccccc"></i><i style="left:34px;top:56px;width:8px;background:#9cdcfe"></i><i style="left:42px;top:56px;width:1px;background:#cccccc"></i><i style="left:43px;top:56px;width:4px;background:#dcdcaa"></i><i style="left:47px;top:56px;width:1px;background:#ffd700"></i><i style="left:48px;top:56px;width:2px;background:#9cdcfe"></i><i style="left:50px;top:56px;width:2px;background:#cccccc"></i><i style="left:12px;top:58px;width:2px;background:#c586c0"></i><i style="left:15px;top:58px;width:1px;background:#ffd700"></i><i style="left:16px;top:58px;width:7px;background:#9cdcfe"></i><i style="left:23px;top:58px;width:2px;background:#cccccc"></i><i style="left:25px;top:58px;width:4px;background:#569cd6"></i><i style="left:29px;top:58px;width:1px;background:#ffd700"></i><i style="left:31px;top:58px;width:6px;background:#c586c0"></i><i style="left:38px;top:58px;width:7px;background:#4ec9b0"></i><i style="left:45px;top:58px;width:1px;background:#cccccc"></i><i style="left:46px;top:58px;width:8px;background:#dcdcaa"></i><i style="left:54px;top:58px;width:3px;background:#cccccc"></i><i style="left:12px;top:60px;width:7px;background:#9cdcfe"></i><i style="left:19px;top:60px;width:1px;background:#cccccc"></i><i style="left:20px;top:60px;width:4px;background:#9cdcfe"></i><i style="left:25px;top:60px;width:1px;background:#cccccc"></i><i style="left:27px;top:60px;width:14px;background:#9cdcfe"></i><i style="left:41px;top:60px;width:1px;background:#cccccc"></i><i style="left:42px;top:60px;width:4px;background:#9cdcfe"></i><i style="left:46px;top:60px;width:1px;background:#cccccc"></i><i style="left:12px;top:62px;width:7px;background:#9cdcfe"></i><i style="left:19px;top:62px;width:1px;background:#cccccc"></i><i style="left:20px;top:62px;width:3px;background:#9cdcfe"></i><i style="left:24px;top:62px;width:1px;background:#cccccc"></i><i style="left:26px;top:62px;width:14px;background:#9cdcfe"></i><i style="left:40px;top:62px;width:1px;background:#cccccc"></i><i style="left:41px;top:62px;width:3px;background:#9cdcfe"></i><i style="left:44px;top:62px;width:1px;background:#cccccc"></i><i style="left:12px;top:64px;width:4px;background:#9cdcfe"></i><i style="left:8px;top:66px;width:1px;background:#ffd700"></i><i style="left:9px;top:66px;width:2px;background:#cccccc"></i><i style="left:4px;top:68px;width:1px;background:#ffd700"></i><i style="left:0px;top:72px;width:1px;background:#ffd700"></i></div>
    <div class="abs" style="left:15px;top:52px;width:105px;height:2px;background:#c22;opacity:.85;"></div>
    <div class="abs" style="left:7px;top:52px;width:4px;height:2px;background:#e33;"></div>
    <div class="abs" style="left:15px;top:52px;width:3px;height:2px;background:#f66;"></div>
    <div class="abs" style="left:20px;top:64px;width:4px;height:2px;background:#e33;"></div>
  </div>
  <!-- scrollbar -->
  <div class="abs" style="left:1479px;top:57px;width:14px;height:448px;background:#1c1c1c;border-left:1px solid #262626;"></div>
  <div class="abs" style="left:1480px;top:131px;width:13px;height:167px;background:#434343;"></div>
  <div class="abs" style="left:1487px;top:245px;width:6px;height:7px;background:#c7403c;"></div>
  <div class="abs" style="left:1480px;top:285px;width:13px;height:2px;background:#a8a8a8;"></div>
  <div class="abs" style="left:1487px;top:287px;width:6px;height:7px;background:#d8453f;"></div>

  <!-- parameter hints widget -->
  <div id="hover" class="abs" style="left:182px;top:325px;width:442px;height:142px;background:#202020;border:1px solid #454545;">
    <div class="abs" style="left:27px;top:0;width:1px;height:140px;background:#3a3a3a;"></div>
    <div class="abs" style="left:28px;top:63px;width:412px;height:1px;background:#3a3a3a;"></div>
    <div class="abs code" style="left:32px;top:5px;color:#cccccc;">(extension) RouteHandlerBuilder
IEndpointRouteBuilder.MapPut(string pattern, Delegate
<span style="color:#2aaaff;font-weight:bold;">handler</span>)</div>
    <div class="abs" style="left:32px;top:70px;font-size:12.6px;line-height:18px;color:#cccccc;white-space:pre;">The delegate executed when the endpoint is matched.</div>
    <div class="abs" style="left:32px;top:96px;font-size:12.6px;line-height:18px;color:#cccccc;white-space:pre;">Adds a RouteEndpoint to the IEndpointRouteBuilder that matches
HTTP PUT requests for the specified pattern.</div>
    <svg class="ic" style="left:6px;top:94px;color:#c5c5c5" width="16" height="16" viewBox="0 0 16 16"><path d="M3.500 10.500L8 6l4.500 4.500" stroke-width="1.1"/></svg>
    <div class="abs" style="left:2px;top:110px;font-size:13px;line-height:16px;color:#cccccc;letter-spacing:0.3px;">1/2</div>
    <svg class="ic" style="left:6px;top:125px;color:#c5c5c5" width="16" height="16" viewBox="0 0 16 16"><path d="M3.500 5.500L8 10l4.500-4.500" stroke-width="1.1"/></svg>
  </div>

  <!-- sticky scroll -->
  <div id="sticky" class="abs" style="left:0;top:57px;width:1359px;height:38px;background:#1f1f1f;box-shadow:0 2px 2px -1px #0c0c0c;">
    <div class="ln code" style="top:0px">7</div><div class="cl code" style="top:0px"><span class="k">public</span> <span class="k">static</span> <span class="k">class</span> <span class="t">APIs</span></div>
    <div class="guide" style="left:66px;top:18px;height:18px;"></div><div class="ln code" style="top:18px">10</div><div class="cl code" style="top:18px">    <span class="k">public</span> <span class="k">static</span> <span class="k">void</span> <span class="f">Register</span><span class="b2">(</span><span class="t">WebApplication</span> <span class="v">app</span><span class="b2">)</span></div>
  </div>
</div>

<!-- PANEL -->
<div id="panel" class="abs">
  <div class="ptab" style="left:20px;">PROBLEMS</div>
  <div class="abs" style="left:90px;top:8px;width:18px;height:18px;border-radius:9px;background:#616161;color:#f8f8f8;font-size:11px;font-weight:bold;line-height:18px;text-align:center;">3</div>
  <div class="ptab" style="left:131px;">OUTPUT</div>
  <div class="ptab" style="left:200px;">DEBUG CONSOLE</div>
  <div class="ptab on" style="left:319px;">TERMINAL</div>
  <div class="abs" style="left:317px;top:27px;width:60px;height:1.500px;background:#0078d4;"></div>
  <div class="ptab" style="left:399px;">PORTS</div>
  <!-- terminal -->
  <div class="abs" style="left:8px;top:43px;width:8px;height:8px;border-radius:4px;background:#2ea0c0;"></div>
  <div class="abs" style="left:8.500px;top:71px;width:7px;height:7px;border-radius:4px;border:1.300px solid #6e6e6e;"></div>
  <div class="term" style="left:20px;top:39.500px;line-height:14px;letter-spacing:-0.2px;">^C<span style="color:#1fc27a;background:#0f3a26;">info</span>: Microsoft.Hosting.Lifetime[0]
      Application is shutting down...
192:StudentApi mo$ </div>
  <div class="abs" style="left:153px;top:68px;width:8px;height:14px;border:1px solid #cccccc;"></div>
  <!-- actions -->
  <svg class="ic" style="left:1264.0px;top:8.0px;color:#cccccc" width="16" height="16" viewBox="0 0 16 16" stroke-width="1.1"><path d="M8 1.500l5.500 3v7L8 14.500l-5.500-3v-7z" stroke-width="1"/><path d="M6.500 12.800V8l5-2.800v4.700z" fill="currentColor" stroke="none"/></svg><svg class="ic" style="left:1318.5px;top:8.0px;color:#cccccc" width="16" height="16" viewBox="0 0 16 16" stroke-width="1.1"><path d="M8 2.500v11M2.500 8h11" stroke-width="1.3"/></svg><svg class="ic" style="left:1337.0px;top:10.0px;color:#cccccc" width="12" height="12" viewBox="0 0 16 16" stroke-width="1.1"><path d="M4 6.500l4 4 4-4"/></svg><svg class="ic" style="left:1358.0px;top:8.0px;color:#cccccc" width="16" height="16" viewBox="0 0 16 16" stroke-width="1.1"><rect x="1.500" y="2.500" width="13" height="11" rx="1"/><path d="M8 2.500v11"/></svg><svg class="ic" style="left:1384.0px;top:8.0px;color:#cccccc" width="16" height="16" viewBox="0 0 16 16" stroke-width="1.1"><path d="M3 4.500h10M6 4.500v-2h4v2"/><path d="M4 4.500l.7 9.500h6.600l.7-9.500z" fill="#8a8a8a"/><path d="M6.700 7v5M9.300 7v5" stroke="#555"/></svg><svg class="ic" style="left:1410.0px;top:8.0px;color:#cccccc" width="16" height="16" viewBox="0 0 16 16" stroke-width="1.1"><circle cx="3" cy="8" r="1" fill="currentColor" stroke="none"/><circle cx="8" cy="8" r="1" fill="currentColor" stroke="none"/><circle cx="13" cy="8" r="1" fill="currentColor" stroke="none"/></svg><svg class="ic" style="left:1435.5px;top:8.0px;color:#cccccc" width="16" height="16" viewBox="0 0 16 16" stroke-width="1.1"><path d="M3.500 10l4.500-4.500 4.500 4.500"/></svg><svg class="ic" style="left:1462.0px;top:8.0px;color:#cccccc" width="16" height="16" viewBox="0 0 16 16" stroke-width="1.1"><path d="M4 4l8 8M12 4l-8 8"/></svg>
  <div class="abs" style="left:1284px;top:0;height:35px;line-height:31px;font-size:11.7px;color:#cccccc;">bash</div>
  <div class="abs" style="left:1482px;top:39px;width:4px;height:4px;background:#4d8fab;opacity:.8"></div>
  <div class="abs" style="left:1482px;top:64px;width:3px;height:7px;background:#777;"></div>
</div>

<!-- STATUS -->
<div id="status" class="abs"><div id="remote" class="abs"><svg class="ic" style="left:9px;top:3px;color:#fff" width="16" height="16" viewBox="0 0 16 16" stroke-width="1.150"><path d="M3.800 6.300l3.400 3.400-3.400 3.400M12.300 2.800L8.900 6.200l3.400 3.400" stroke="#e6f1fa"/></svg></div><svg class="ic" style="left:40.7px;top:2.2px;color:#cccccc" width="16" height="16" viewBox="0 0 16 16" stroke-width="1.1"><path d="M5.500 2.500h5M6.500 2.500v4L3 12.500a.8.800 0 0 0 .7 1.200h8.600a.8.800 0 0 0 .7-1.200L9.500 6.500v-4M4.500 10.500h7"/></svg><span style="left:59.2px;">0 tests</span><span style="left:114.4px;">NUnit</span><svg class="ic" style="left:160.7px;top:2.2px;color:#cccccc" width="16" height="16" viewBox="0 0 16 16" stroke-width="1.1"><circle cx="8" cy="8" r="5.800"/><path d="M5.800 5.800l4.400 4.400M10.200 5.800l-4.400 4.400"/></svg><span style="left:180.0px;">3</span><svg class="ic" style="left:189.6px;top:2.2px;color:#cccccc" width="16" height="16" viewBox="0 0 16 16" stroke-width="1.1"><path d="M8 2.500l6 11H2z" stroke-linejoin="round"/><path d="M8 6.500v3.500M8 11.200v1"/></svg><span style="left:208.0px;">0</span><svg class="ic" style="left:230.5px;top:2.2px;color:#cccccc" width="16" height="16" viewBox="0 0 16 16" stroke-width="1.1"><path d="M4.500 13.500L8 5.500l3.500 8M5.800 10.500h4.400"/><circle cx="8" cy="5" r="1.200"/><path d="M4.800 2.200a4.200 4.200 0 0 0 0 5.600M11.200 2.200a4.200 4.200 0 0 1 0 5.600M2.800 .8a6.500 6.500 0 0 0 0 8.400M13.200 .8a6.500 6.500 0 0 1 0 8.400" stroke-width=".9"/></svg><span style="left:249.0px;">0</span><span style="left:272.6px;">Projects: StudentApi</span><span style="left:404.2px;">Debug Any CPU</span><span style="left:1519.5px;">Ln 33, Col 15</span><span style="left:1612.5px;">Spaces: 4</span><span style="left:1684.5px;">UTF-8</span><span style="left:1737.0px;letter-spacing:-0.500px;">CRLF</span><span style="left:1781.0px;top:-1px;font-size:13px;letter-spacing:2.500px;">{}</span><span style="left:1800.7px;">C#</span><svg class="ic" style="left:1829.5px;top:2.0px;color:#d0d0d0" width="17" height="17" viewBox="0 0 16 16" stroke-width="1.25"><path d="M2 9.500c0-1.300.4-2.300 1-2.900C3 4.300 4.400 3 6.500 3c.9 0 1.500.5 1.500.5S8.600 3 9.500 3c2.100 0 3.500 1.300 3.500 3.600.6.600 1 1.600 1 2.900V11c-1.500 1.500-4 2.500-6 2.500S3.500 12.500 2 11z"/><path d="M6.300 8.800v1.700M9.700 8.800v1.700"/><path d="M1.800 2.500l12.400 11.500" stroke-width="1.400"/></svg><svg class="ic" style="left:1859.0px;top:2.0px;color:#d0d0d0" width="17" height="17" viewBox="0 0 16 16" stroke-width="1.2"><path d="M8 1.500l5.700 3.250v6.500L8 14.500l-5.700-3.250v-6.500z"/><path d="M7.200 6.600c-1.700-.6-2.700.3-2.700 1.400s1 2 2.700 1.400M9 6v4M10.800 6v4M8.400 7.300h3M8.400 8.700h3" stroke-width=".8"/></svg><svg class="ic" style="left:1888.5px;top:2.0px;color:#d0d0d0" width="17" height="17" viewBox="0 0 16 16" stroke-width="1.25"><path d="M8 2.500A3.600 3.600 0 0 0 4.400 6.100v3L3.200 11.500h9.600L11.600 9.100V7.500"/><path d="M6.700 13a1.400 1.400 0 0 0 2.600 0"/><circle cx="11.800" cy="4" r="2.100" fill="currentColor" stroke="none"/></svg></div>

</div>
</body>
</html>
